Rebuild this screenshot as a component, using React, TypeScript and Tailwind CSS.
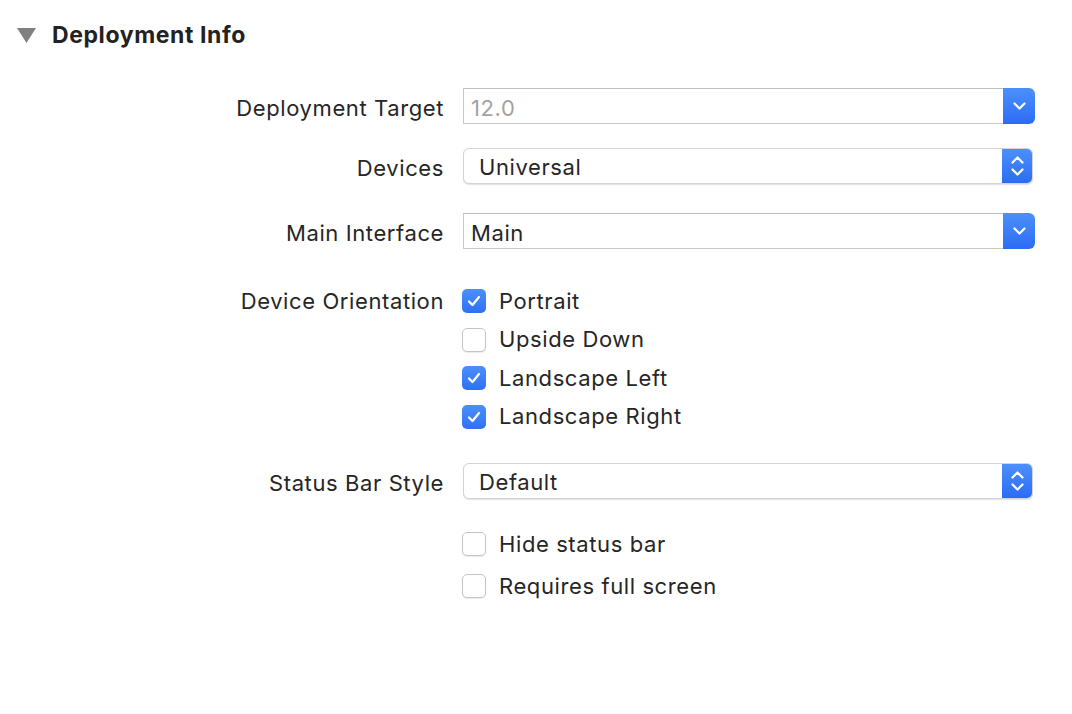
import React from 'react';

function Chevron({ up = false }: { up?: boolean }) {
  return (
    <svg width="13" height="8" viewBox="0 0 13 8" fill="none">
      <path
        d={up ? 'M1.5 6.5 L6.5 1.5 L11.5 6.5' : 'M1.5 1.5 L6.5 6.5 L11.5 1.5'}
        stroke="white"
        strokeWidth="2.2"
        strokeLinecap="round"
        strokeLinejoin="round"
      />
    </svg>
  );
}

function ComboBox({ value, muted = false }: { value: string; muted?: boolean }) {
  return (
    <div className="flex h-[36px] w-[572px]">
      <div
        className={`flex flex-1 items-center border border-[#c8c8c8] border-t-[#bdbdbd] border-r-0 bg-white pl-[7px] pt-[4px] ${
          muted ? 'text-[#a3a3a3]' : 'text-[#262626]'
        }`}
      >
        {value}
      </div>
      <div className="flex w-[32px] items-center justify-center rounded-r-[6px] bg-gradient-to-b from-[#4c8ffb] to-[#2c6cf5]">
        <Chevron />
      </div>
    </div>
  );
}

function PopUp({ value }: { value: string }) {
  return (
    <div className="flex h-[36px] w-[570px] overflow-hidden rounded-[6px] border border-[#d3d3d3] bg-white shadow-[0_1px_1px_rgba(0,0,0,0.12)]">
      <div className="flex flex-1 items-center pl-[15px] pt-[2px] text-[#262626]">{value}</div>
      <div className="flex w-[30px] flex-col items-center justify-center gap-[4px] bg-gradient-to-b from-[#4c8ffb] to-[#2c6cf5]">
        <Chevron up />
        <Chevron />
      </div>
    </div>
  );
}

function Check({ label, checked }: { label: string; checked: boolean }) {
  return (
    <div className="flex h-[38.5px] items-center gap-[13px]">
      {checked ? (
        <div className="flex h-[24px] w-[24px] items-center justify-center rounded-[5px] bg-gradient-to-b from-[#4c8ffb] to-[#2f70f6]">
          <svg width="14" height="12" viewBox="0 0 14 12" fill="none">
            <path
              d="M2 6.5 L5.5 10 L12 2"
              stroke="white"
              strokeWidth="2.2"
              strokeLinecap="round"
              strokeLinejoin="round"
            />
          </svg>
        </div>
      ) : (
        <div className="h-[24px] w-[24px] rounded-[5px] border border-[#c4c4c4] bg-white shadow-[0_1px_1px_rgba(0,0,0,0.08)]" />
      )}
      <span>{label}</span>
    </div>
  );
}

function Row({ label, className = '', children }: { label?: string; className?: string; children: React.ReactNode }) {
  return (
    <div className={`flex items-start ${className}`}>
      <div className="flex h-[36px] w-[444px] items-center justify-end pt-[5px] text-[#262626]">{label}</div>
      <div className="ml-[19px]">{children}</div>
    </div>
  );
}

export default function App() {
  return (
    <div className="h-[714px] w-[1072px] overflow-hidden bg-white font-['Inter',sans-serif] text-[22px] tracking-[0.6px] text-[#262626]">
      {/* Section header */}
      <div className="mt-[22px] flex h-[26px] items-center gap-[16px] pl-[17px]">
        <svg width="19" height="15" viewBox="0 0 19 15">
          <path d="M0 0 H19 L9.5 15 Z" fill="#808080" />
        </svg>
        <span className="text-[23px] font-bold tracking-[0.6px] text-[#222]">Deployment Info</span>
      </div>

      <Row label="Deployment Target" className="mt-[40px]">
        <ComboBox value="12.0" muted />
      </Row>
      <Row label="Devices" className="mt-[24px]">
        <PopUp value="Universal" />
      </Row>
      <Row label="Main Interface" className="mt-[29px]">
        <ComboBox value="Main" />
      </Row>

      <div className="mt-[33px] flex items-start">
        <div className="flex h-[38.5px] w-[444px] items-center justify-end">Device Orientation</div>
        <div className="ml-[18px] flex flex-col">
          <Check label="Portrait" checked />
          <Check label="Upside Down" checked={false} />
          <Check label="Landscape Left" checked />
          <Check label="Landscape Right" checked />
        </div>
      </div>

      <Row label="Status Bar Style" className="mt-[27px]">
        <PopUp value="Default" />
      </Row>

      <div className="ml-[462px] mt-[24px] flex flex-col">
        <div className="flex h-[42px] flex-col justify-center">
          <Check label="Hide status bar" checked={false} />
        </div>
        <div className="flex h-[42px] flex-col justify-center">
          <Check label="Requires full screen" checked={false} />
        </div>
      </div>
    </div>
  );
}
